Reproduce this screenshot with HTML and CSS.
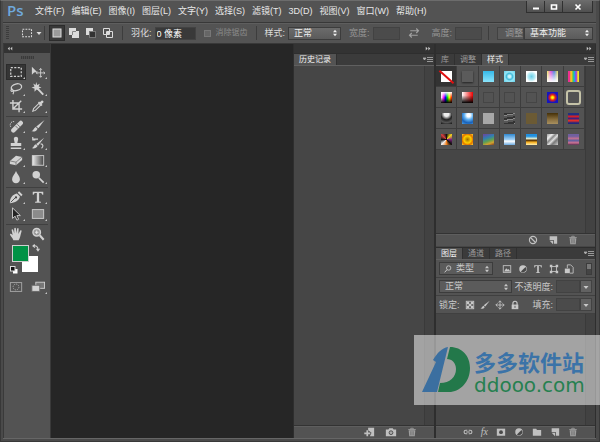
FILE: index.html
```html
<!DOCTYPE html>
<html lang="zh-CN">
<head>
    <meta charset="UTF-8">
    <meta name="viewport" content="width=device-width, initial-scale=1.0">
    <title>Ps</title>
    <link rel="stylesheet" href="styles.css">
</head>
<body>

    <!-- Icon sprite -->
    <svg class="sprite" aria-hidden="true">
        <symbol id="i-marquee" viewBox="0 0 16 16"><rect x="2" y="3" width="12" height="10" fill="none" stroke="currentColor" stroke-width="1.4" stroke-dasharray="2.4 1.6"/></symbol>
        <symbol id="i-move" viewBox="0 0 16 16"><path d="M1 2v9l2.500-2.300L7 8z" fill="currentColor"/><path d="M11 4v10M6 9h10M9.500 5.500L11 4l1.500 1.500M9.500 12.500L11 14l1.500-1.500M7.500 7.500L6 9l1.500 1.500M14.500 7.500L16 9l-1.500 1.500" fill="none" stroke="currentColor"/></symbol>
        <symbol id="i-lasso" viewBox="0 0 16 16"><ellipse cx="8.500" cy="6" rx="6" ry="3.800" transform="rotate(-14 8.500 6)" fill="none" stroke="currentColor" stroke-width="1.500"/><path d="M4 8c-3 1-2 3.500 0 2.500S6 10 4.500 14" fill="none" stroke="currentColor" stroke-width="1.200"/></symbol>
        <symbol id="i-wand" viewBox="0 0 16 16"><path d="M7 7l7 7.500" stroke="currentColor" stroke-width="2.200"/><path d="M6 0l1 3.500L10 2 8.800 5 12 6.200 8.800 7.300 9.500 10 6.500 8.700 4 11V7.500L.5 6.500 4 5 2.500 1.800 5.200 3.300z" fill="currentColor"/></symbol>
        <symbol id="i-crop" viewBox="0 0 16 16"><path d="M4.500 1v10.500H15M1 4.500h10.500V15M4.500 11.500L14 2" fill="none" stroke="currentColor" stroke-width="1.600"/></symbol>
        <symbol id="i-dropper" viewBox="0 0 16 16"><path d="M2 14l1-3 6-6 2 2-6 6z" fill="none" stroke="currentColor" stroke-width="1.200"/><path d="M8 4l1.200-1.200 1 1L12 2c1-1.200 3.200.8 2 2l-1.800 1.800 1 1L12 8z" fill="currentColor"/></symbol>
        <symbol id="i-heal" viewBox="0 0 16 16"><path d="M5 13L13.500 4.500" stroke="currentColor" stroke-width="5" stroke-linecap="round"/><path d="M7.500 8l3 3M9.500 6l3 3" stroke="#666"/><path d="M2 9C0 6 3 2 6 3" fill="none" stroke="currentColor" stroke-dasharray="1.500 1"/></symbol>
        <symbol id="i-brush" viewBox="0 0 16 16"><path d="M15.500 1L8.500 10.500 6 8.500z" fill="currentColor"/><path d="M5.500 9l2 2c-1 3-4 3.500-7 3C3 13 3 10 5.500 9z" fill="currentColor"/></symbol>
        <symbol id="i-stamp" viewBox="0 0 16 16"><path d="M5.500 3.500C5.500 0 10.500 0 10.500 3.500L9.500 8H14v3.500H2V8h4.500zM2 13h12v1.800H2z" fill="currentColor"/></symbol>
        <symbol id="i-history" viewBox="0 0 16 16"><path d="M15 2L8 11 6 9zM5.500 9.500l2 2c-1 2.500-4 3-6.500 2.500 2.500-1 2-3.500 4.500-4.500z" fill="currentColor"/><path d="M2 3.500h6M2 1v3.500h3M11 9c3 0 3.500 3 1 5" fill="none" stroke="currentColor" stroke-width="1.300"/></symbol>
        <symbol id="i-eraser" viewBox="0 0 16 16"><path d="M1 9l7-6 7 1.500v3.500l-7 6-7-1.500z" fill="currentColor"/><path d="M1 9l7 1.500 7-6M8 10.500V14" fill="none" stroke="#777"/></symbol>
        <symbol id="i-gradient" viewBox="0 0 16 16"><linearGradient id="grad"><stop stop-color="#eee"/><stop offset="1" stop-color="#444"/></linearGradient><rect x="1.500" y="3" width="13" height="11" fill="url(#grad)" stroke="currentColor"/></symbol>
        <symbol id="i-drop" viewBox="0 0 16 16"><path d="M8 1c1 3 4.500 6 4.500 9.500 0 6-9 6-9 0C3.500 7 7 4 8 1z" fill="currentColor"/></symbol>
        <symbol id="i-dodge" viewBox="0 0 16 16"><circle cx="6" cy="5.500" r="4.300" fill="currentColor"/><path d="M9 9l5.500 5.500" stroke="currentColor" stroke-width="2"/></symbol>
        <symbol id="i-pen" viewBox="0 0 16 16"><path d="M1 15C1 9 4 5 9 4l3.500 3.500C11.500 12 7 15 1 15zM10 3l1.500-1.500 4 4L14 7z" fill="currentColor"/><path d="M2 14l5.500-5.500" stroke="#444"/><circle cx="8" cy="8.500" r="1.300" fill="#444"/></symbol>
        <symbol id="i-type" viewBox="0 0 16 16"><path d="M2 2h12v3.500h-1C12.500 3.500 12 3.300 9.300 3.300V13l2 .5v1H4.700v-1l2-.5V3.300C4 3.300 3.500 3.500 3 5.500H2z" fill="currentColor"/></symbol>
        <symbol id="i-arrow" viewBox="0 0 16 16"><path d="M4 1v12l3-2.500 2 4.500 2-1-2-4.200h4z" fill="#222" stroke="currentColor"/></symbol>
        <symbol id="i-rect" viewBox="0 0 16 16"><rect x="1.500" y="3" width="13" height="10" fill="#8b8b8b" stroke="currentColor"/></symbol>
        <symbol id="i-hand" viewBox="0 0 16 16"><path d="M5 15C4 12 1 10 1 8c1-1 2.500.3 3.200 1.500L3 3.500c0-1.200 1.500-1.200 1.800 0L6 7.500 6 1.800c.2-1.200 1.700-1.200 1.900 0L8.300 7l1-5c.4-1.200 1.800-.9 1.700.3L10.700 8l2-3.800c.8-1 2-.3 1.600.8C13 9 13 12 11 15z" fill="currentColor"/></symbol>
        <symbol id="i-zoom" viewBox="0 0 16 16"><circle cx="6.500" cy="6" r="4.300" fill="#999" stroke="currentColor" stroke-width="1.600"/><path d="M10 9.500l4.500 5" stroke="currentColor" stroke-width="2.400"/><path d="M4.500 6h4M6.500 4v4" stroke="#eee"/></symbol>
        <symbol id="i-mask" viewBox="0 0 16 16"><rect x="1.500" y="3" width="13" height="10" fill="none" stroke="currentColor"/><circle cx="8" cy="8" r="3.300" fill="none" stroke="currentColor" stroke-dasharray="1.500 1"/></symbol>
        <symbol id="i-screen" viewBox="0 0 16 16"><rect x="5.500" y="2.500" width="10" height="7" fill="#777" stroke="currentColor"/><rect x="1" y="6" width="9" height="7" fill="currentColor" stroke="#666"/></symbol>
        <symbol id="i-swap" viewBox="0 0 16 16"><path d="M3 4c5-2 9 2 9 7M5.500 1L2 4l4 3M9 9.500l3 4 3-4" fill="none" stroke="currentColor" stroke-width="2.200"/></symbol>
        <symbol id="i-default" viewBox="0 0 16 16"><rect x="6" y="6" width="9" height="9" fill="#fff"/><rect x="1" y="1" width="9" height="9" fill="#111" stroke="#ddd" stroke-width="2"/></symbol>
        <symbol id="i-sel-new" viewBox="0 0 12 12"><rect x="2" y="2" width="8" height="8" fill="#999" stroke="currentColor"/></symbol>
        <symbol id="i-sel-add" viewBox="0 0 12 12"><path d="M1 1h7v3h3v7H4V8H1z" fill="currentColor"/><path d="M4.500 8V4.500H8" fill="none" stroke="#888"/></symbol>
        <symbol id="i-sel-sub" viewBox="0 0 12 12"><path d="M1 1h7v3H4v4H1z" fill="currentColor"/><rect x="4.500" y="4.500" width="6" height="6" fill="#333" stroke="#777"/></symbol>
        <symbol id="i-sel-int" viewBox="0 0 12 12"><path d="M1.500 1.500h6v6h-6zM4.500 4.500h6v6h-6z" fill="none" stroke="currentColor"/><path d="M5 5h2v2H5z" fill="currentColor"/></symbol>
        <symbol id="i-exchange" viewBox="0 0 16 16"><path d="M3 5h11M11 2l3 3-3 3M13 11H2M5 8l-3 3 3 3" fill="none" stroke="currentColor" stroke-width="1.500"/></symbol>
        <symbol id="i-updown" viewBox="0 0 8 10"><path d="M1.500 4L4 1l2.500 3zM1.500 6L4 9l2.500-3z" fill="currentColor"/></symbol>
        <symbol id="i-down" viewBox="0 0 8 8"><path d="M1.500 3h5L4 6z" fill="currentColor"/></symbol>
        <symbol id="i-menu" viewBox="0 0 10 6"><path d="M0 1h3L1.500 3zM4 .5h6M4 2.500h6M4 4.500h6" fill="currentColor" stroke="currentColor" stroke-width=".8"/></symbol>
        <symbol id="i-collapse" viewBox="0 0 8 6"><path d="M3.500 .5L1 3l2.500 2.500zM7 .5L4.500 3 7 5.500z" fill="currentColor"/></symbol>
        <symbol id="i-expand" viewBox="0 0 8 6"><path d="M1 .5L3.500 3 1 5.500zM4.500 .5L7 3 4.500 5.500z" fill="currentColor"/></symbol>
        <symbol id="i-trash" viewBox="0 0 12 12"><path d="M1.500 3h9M4.500 3V1.500h3V3" fill="none" stroke="currentColor"/><path d="M2 4h8l-.7 7H2.700z" fill="currentColor"/><path d="M4.700 5v5M7.300 5v5" stroke="#555" stroke-width=".8"/></symbol>
        <symbol id="i-new" viewBox="0 0 12 12"><path d="M2 1.500h9v9H7V6H2z" fill="currentColor"/><path d="M2 7h4v4z" fill="currentColor"/></symbol>
        <symbol id="i-none" viewBox="0 0 12 12"><circle cx="6" cy="6" r="4.300" fill="none" stroke="currentColor" stroke-width="1.400"/><path d="M3 3l6 6" stroke="currentColor" stroke-width="1.400"/></symbol>
        <symbol id="i-camera" viewBox="0 0 14 12"><path d="M1 3h3l1-1.500h4L10 3h3v8H1z" fill="currentColor"/><circle cx="7" cy="6.800" r="2.200" fill="#aaa" stroke="#444"/></symbol>
        <symbol id="i-newdoc" viewBox="0 0 14 12"><path d="M6 1h7v10H8l2-4-4-3z" fill="currentColor"/><path d="M5 4v7M1.500 7.500h7" stroke="currentColor" stroke-width="2"/></symbol>
        <symbol id="i-link" viewBox="0 0 14 12"><path d="M6 3.500H4a2.500 2.500 0 000 5h2M8 3.500h2a2.500 2.500 0 010 5H8M4.500 6h5" fill="none" stroke="currentColor" stroke-width="1.500"/></symbol>
        <symbol id="i-maskbtn" viewBox="0 0 12 12"><path d="M1 2h10v8.500H1z" fill="currentColor"/><circle cx="6" cy="6.200" r="2.300" fill="#484848"/></symbol>
        <symbol id="i-adjust" viewBox="0 0 12 12"><circle cx="6" cy="6" r="4.500" fill="currentColor"/><path d="M9 3.500A3.900 3.900 0 013.500 9z" fill="#484848"/></symbol>
        <symbol id="i-folder" viewBox="0 0 12 12"><path d="M1 2h4l1 1.500h5v7H1z" fill="currentColor"/></symbol>
        <symbol id="i-search" viewBox="0 0 12 12"><circle cx="7" cy="4.500" r="3.300" fill="none" stroke="currentColor" stroke-width="1.300"/><path d="M4.500 7L1 11" stroke="currentColor" stroke-width="1.500"/></symbol>
        <symbol id="i-image" viewBox="0 0 12 12"><rect x="1.500" y="2" width="9" height="8" fill="none" stroke="currentColor"/><path d="M2.500 9l2.500-4 2 2 1-1 2 3z" fill="currentColor"/></symbol>
        <symbol id="i-shape" viewBox="0 0 12 12"><rect x="3" y="3" width="6" height="6" fill="none" stroke="currentColor"/><path d="M1 1h3v3H1zM8 1h3v3H8zM1 8h3v3H1zM8 8h3v3H8z" fill="currentColor"/></symbol>
        <symbol id="i-smart" viewBox="0 0 12 12"><path d="M4 5V1h4l3 3v7H7" fill="none" stroke="currentColor"/><path d="M1 5.500h6V11H1z" fill="currentColor"/></symbol>
        <symbol id="i-checker" viewBox="0 0 12 12"><rect x="1.500" y="1.500" width="9" height="9" fill="none" stroke="currentColor"/><path d="M2 2h3v3H2zM7 2h3v3H7zM4.500 4.500h3v3h-3zM2 7h3v3H2zM7 7h3v3H7z" fill="currentColor"/></symbol>
        <symbol id="i-cross" viewBox="0 0 12 12"><path d="M6 1v10M1 6h10M4 3l2-2 2 2M4 9l2 2 2-2M3 4L1 6l2 2M9 4l2 2-2 2" fill="none" stroke="currentColor"/></symbol>
        <symbol id="i-lock" viewBox="0 0 12 12"><path d="M3.500 6V4a2.500 2.500 0 015 0v2" fill="none" stroke="currentColor" stroke-width="1.400"/><path d="M2 5.500h8V11H2z" fill="currentColor"/><path d="M6 7v2.500" stroke="#444"/></symbol>
    </svg>

    <div class="window">

        <header class="menubar">
            <span class="logo">Ps</span>
            <nav class="menus">
                <button>文件(F)</button>
                <button>编辑(E)</button>
                <button>图像(I)</button>
                <button>图层(L)</button>
                <button>文字(Y)</button>
                <button>选择(S)</button>
                <button>滤镜(T)</button>
                <button>3D(D)</button>
                <button>视图(V)</button>
                <button>窗口(W)</button>
                <button>帮助(H)</button>
            </nav>
            <div class="window-buttons">
                <button aria-label="最小化"><svg viewBox="0 0 10 8"><path d="M2 5.500h6" stroke="#fff" stroke-width="2"/></svg></button>
                <button aria-label="最大化"><svg viewBox="0 0 10 8"><path d="M2.500 2h5v4h-5z" fill="none" stroke="#fff" stroke-width="1.600"/></svg></button>
                <button class="close" aria-label="关闭"><svg viewBox="0 0 10 8"><path d="M2.500 1.500l5 5M7.500 1.500l-5 5" stroke="#fff" stroke-width="1.600"/></svg></button>
            </div>
        </header>

        <div class="options">
            <span class="grip"></span>
            <button class="current-tool" aria-label="矩形选框"><svg class="icon-12"><use href="#i-marquee"/></svg><svg class="icon-8"><use href="#i-down"/></svg></button>
            <span class="separator"></span>
            <div class="modes">
                <button class="active" aria-label="新选区"><svg class="icon-12"><use href="#i-sel-new"/></svg></button>
                <button aria-label="添加到选区"><svg class="icon-12"><use href="#i-sel-add"/></svg></button>
                <button aria-label="从选区减去"><svg class="icon-12"><use href="#i-sel-sub"/></svg></button>
                <button aria-label="与选区交叉"><svg class="icon-12"><use href="#i-sel-int"/></svg></button>
            </div>
            <span class="separator"></span>
            <label class="field">羽化: <input class="feather" type="text" value="0 像素"></label>
            <label class="field check"><input type="checkbox" disabled> 消除锯齿</label>
            <span class="separator"></span>
            <label class="field">样式:
                <span class="select style-select"><select><option>正常</option></select><svg><use href="#i-updown"/></svg></span>
            </label>
            <label class="field off">宽度: <input type="text" disabled></label>
            <button class="exchange" aria-label="交换宽度和高度" disabled><svg class="icon-12"><use href="#i-exchange"/></svg></button>
            <label class="field off">高度: <input type="text" disabled></label>
            <span class="separator"></span>
            <div class="workspace">
                <button class="refine" disabled>调整</button>
                <span class="select"><select aria-label="工作区"><option>基本功能</option></select><svg><use href="#i-updown"/></svg></span>
            </div>
        </div>

        <main class="main">

            <aside class="toolbox">
                <div class="dock-header"><svg><use href="#i-collapse"/></svg></div>
                <div class="toolbox-grip"></div>
                <div class="tools">
                    <button class="active" aria-label="矩形选框工具"><svg><use href="#i-marquee"/></svg></button>
                    <button aria-label="移动工具"><svg><use href="#i-move"/></svg></button>
                    <button aria-label="套索工具"><svg><use href="#i-lasso"/></svg></button>
                    <button aria-label="魔棒工具"><svg><use href="#i-wand"/></svg></button>
                    <button aria-label="裁剪工具"><svg><use href="#i-crop"/></svg></button>
                    <button aria-label="吸管工具"><svg><use href="#i-dropper"/></svg></button>
                </div>
                <div class="tools">
                    <button aria-label="修复画笔工具"><svg><use href="#i-heal"/></svg></button>
                    <button aria-label="画笔工具"><svg><use href="#i-brush"/></svg></button>
                    <button aria-label="仿制图章工具"><svg><use href="#i-stamp"/></svg></button>
                    <button aria-label="历史记录画笔工具"><svg><use href="#i-history"/></svg></button>
                    <button aria-label="橡皮擦工具"><svg><use href="#i-eraser"/></svg></button>
                    <button aria-label="渐变工具"><svg><use href="#i-gradient"/></svg></button>
                    <button aria-label="模糊工具"><svg><use href="#i-drop"/></svg></button>
                    <button aria-label="减淡工具"><svg><use href="#i-dodge"/></svg></button>
                </div>
                <div class="tools">
                    <button aria-label="钢笔工具"><svg><use href="#i-pen"/></svg></button>
                    <button aria-label="文字工具"><svg><use href="#i-type"/></svg></button>
                    <button aria-label="路径选择工具"><svg><use href="#i-arrow"/></svg></button>
                    <button aria-label="矩形工具"><svg><use href="#i-rect"/></svg></button>
                </div>
                <div class="tools last">
                    <button class="single" aria-label="抓手工具"><svg><use href="#i-hand"/></svg></button>
                    <button class="single" aria-label="缩放工具"><svg><use href="#i-zoom"/></svg></button>
                </div>
                <div class="colors">
                    <button class="background" aria-label="背景色"></button>
                    <button class="foreground" aria-label="前景色"></button>
                    <button class="swap" aria-label="切换颜色"><svg><use href="#i-swap"/></svg></button>
                    <button class="default" aria-label="默认颜色"><svg><use href="#i-default"/></svg></button>
                </div>
                <div class="tools last">
                    <button class="single dim" aria-label="快速蒙版"><svg><use href="#i-mask"/></svg></button>
                    <button aria-label="屏幕模式"><svg><use href="#i-screen"/></svg></button>
                </div>
            </aside>

            <section class="canvas"></section>

            <section class="dock history">
                <div class="dock-header right"><svg><use href="#i-expand"/></svg></div>
                <div class="tabs">
                    <button class="active">历史记录</button>
                    <svg class="panel-menu"><use href="#i-menu"/></svg>
                </div>
                <div class="panel-body"><div class="scrollbar"></div></div>
                <footer class="panel-footer">
                    <button aria-label="从当前状态创建新文档"><svg class="icon-12"><use href="#i-newdoc"/></svg></button>
                    <button aria-label="创建新快照"><svg class="icon-12"><use href="#i-camera"/></svg></button>
                    <button class="dim" aria-label="删除"><svg class="icon-10"><use href="#i-trash"/></svg></button>
                </footer>
            </section>

            <section class="dock side">
                <div class="dock-header right"><svg><use href="#i-expand"/></svg></div>

                <div class="tabs">
                    <button>库</button>
                    <button>调整</button>
                    <button class="active">样式</button>
                    <svg class="panel-menu"><use href="#i-menu"/></svg>
                </div>
                <div class="panel-body styles-panel">
                    <div class="styles">
                        <div class="cell active"><i class="s-none"></i></div>
                        <div class="cell"><i class="s-gray"></i></div>
                        <div class="cell"><i class="s-sky"></i></div>
                        <div class="cell"><i class="s-glow"></i></div>
                        <div class="cell"><i class="s-glow-white"></i></div>
                        <div class="cell"><i class="s-pastel"></i></div>
                        <div class="cell"><i class="s-bars"></i></div>

                        <div class="cell"><i class="s-spectrum"></i></div>
                        <div class="cell"><i class="s-red"></i></div>
                        <div class="cell"><i class="s-empty"></i></div>
                        <div class="cell"><i class="s-empty"></i></div>
                        <div class="cell"><i class="s-empty"></i></div>
                        <div class="cell"><i class="s-target"></i></div>
                        <div class="cell"><i class="s-frame"></i></div>

                        <div class="cell"><i class="s-chrome"></i></div>
                        <div class="cell"><i class="s-gel"></i></div>
                        <div class="cell"><i class="s-silver"></i></div>
                        <div class="cell"><i class="s-noise"></i></div>
                        <div class="cell"><i class="s-brown"></i></div>
                        <div class="cell"><i class="s-bronze"></i></div>
                        <div class="cell"><i class="s-stripes"></i></div>

                        <div class="cell"><i class="s-camo"></i></div>
                        <div class="cell"><i class="s-gold"></i></div>
                        <div class="cell"><i class="s-rainbow"></i></div>
                        <div class="cell"><i class="s-cloud"></i></div>
                        <div class="cell"><i class="s-sunset"></i></div>
                        <div class="cell"><i class="s-marble"></i></div>
                        <div class="cell"><i class="s-plum"></i></div>
                    </div>
                    <div class="scrollbar"></div>
                </div>
                <footer class="panel-footer">
                    <button aria-label="清除样式"><svg class="icon-10"><use href="#i-none"/></svg></button>
                    <button aria-label="创建新样式"><svg class="icon-10"><use href="#i-new"/></svg></button>
                    <button class="dim" aria-label="删除样式"><svg class="icon-10"><use href="#i-trash"/></svg></button>
                </footer>

                <div class="tabs layer-tabs">
                    <button class="active">图层</button>
                    <button>通道</button>
                    <button>路径</button>
                    <svg class="panel-menu"><use href="#i-menu"/></svg>
                </div>
                <div class="layer-row">
                    <span class="select kind"><svg class="search"><use href="#i-search"/></svg><select aria-label="滤镜类型"><option>类型</option></select><svg><use href="#i-updown"/></svg></span>
                    <div class="filters">
                        <button aria-label="像素图层"><svg class="icon-10"><use href="#i-image"/></svg></button>
                        <button aria-label="调整图层"><svg class="icon-10"><use href="#i-adjust"/></svg></button>
                        <button aria-label="文字图层"><svg class="icon-10"><use href="#i-type"/></svg></button>
                        <button aria-label="形状图层"><svg class="icon-10"><use href="#i-shape"/></svg></button>
                        <button aria-label="智能对象"><svg class="icon-10"><use href="#i-smart"/></svg></button>
                    </div>
                    <span class="toggle"></span>
                </div>
                <div class="layer-row">
                    <span class="select blend"><select aria-label="混合模式"><option>正常</option></select><svg><use href="#i-updown"/></svg></span>
                    <label class="amount">不透明度: <input type="text"></label>
                    <button class="drop" aria-label="不透明度选项"><svg class="icon-8"><use href="#i-down"/></svg></button>
                </div>
                <div class="layer-row">
                    <span class="lock-label">锁定:</span>
                    <div class="locks">
                        <button aria-label="锁定透明像素"><svg class="icon-10"><use href="#i-checker"/></svg></button>
                        <button aria-label="锁定图像像素"><svg class="icon-10"><use href="#i-brush"/></svg></button>
                        <button aria-label="锁定位置"><svg class="icon-10"><use href="#i-cross"/></svg></button>
                        <button aria-label="锁定全部"><svg class="icon-10"><use href="#i-lock"/></svg></button>
                    </div>
                    <label class="amount">填充: <input type="text"></label>
                    <button class="drop" aria-label="填充选项"><svg class="icon-8"><use href="#i-down"/></svg></button>
                </div>
                <div class="panel-body"><div class="scrollbar"></div></div>
                <footer class="panel-footer layer-footer">
                    <button aria-label="链接图层"><svg class="icon-10"><use href="#i-link"/></svg></button>
                    <button class="fx">fx</button>
                    <button aria-label="添加蒙版"><svg class="icon-10"><use href="#i-maskbtn"/></svg></button>
                    <button aria-label="调整图层"><svg class="icon-10"><use href="#i-adjust"/></svg></button>
                    <button aria-label="新建组"><svg class="icon-10"><use href="#i-folder"/></svg></button>
                    <button aria-label="新建图层"><svg class="icon-10"><use href="#i-new"/></svg></button>
                    <button class="dim" aria-label="删除图层"><svg class="icon-10"><use href="#i-trash"/></svg></button>
                </footer>
            </section>

        </main>

        <div class="watermark">
            <svg viewBox="0 0 48 46" aria-hidden="true">
                <path d="M0 45L14 15l-3-2C15 6 20 1 26 0L15 45z" fill="#3b6fa0"/>
                <path d="M28 0C40 0 48 9 48 21 48 35 38 45 27 45H16l2-9c10 0 16-6 16-14 0-6-4-10-9-10z" fill="#23784a"/>
            </svg>
            <div class="watermark-text">
                <strong>多多软件站</strong>
                <span>ddooo.com</span>
            </div>
        </div>

    </div>

</body>
</html>
```

FILE: styles.css
```css
* {
    box-sizing: border-box;
}
body {
    margin: 0;
    background-color: #464646;
    color: #dcdcdc;
    font-family: "Liberation Sans", "Noto Sans CJK SC", sans-serif;
    font-size: 9px;
    line-height: 12px;
}
button,
input,
select {
    margin: 0;
    padding: 0;
    border: 0;
    border-radius: 0;
    background: none;
    color: inherit;
    font: inherit;
}
button {
    display: flex;
    align-items: center;
    justify-content: center;
}
svg {
    display: block;
    flex: none;
}
.sprite {
    position: absolute;
    width: 0;
    height: 0;
}
.icon-8 {
    width: 8px;
    height: 8px;
}
.icon-10 {
    width: 10px;
    height: 10px;
}
.icon-12 {
    width: 12px;
    height: 12px;
}
.dim {
    opacity: 0.7;
}

/* Window frame */
.window {
    position: relative;
    display: flex;
    flex-direction: column;
    height: 100vh;
    padding: 0 3px 2px 2px;
    border: 1px solid #383838;
    border-top-color: #6c6c6c;
    background-color: #4a4a4a;
}
.menubar {
    display: flex;
    align-items: flex-start;
    height: 21px;
    background-color: #535353;
}
.logo {
    width: 27px;
    padding-left: 4px;
    color: #6fa8dc;
    font-family: "Open Sans", sans-serif;
    font-size: 15px;
    font-weight: 600;
    line-height: 18px;
}
.menus {
    display: flex;
    flex: 1;
    gap: 7px;
    padding: 4px 0 0 5px;
}
.menus button {
    white-space: nowrap;
    color: #e8e8e8;
}
.window-buttons {
    display: flex;
    height: 12px;
    margin-right: 3px;
    border: 1px solid #303030;
    border-top: 0;
}
.window-buttons button {
    width: 18px;
    background: linear-gradient(#6a6a6a, #505050);
    border-right: 1px solid #303030;
}
.window-buttons .close {
    width: 29px;
    border-right: 0;
}
.window-buttons svg {
    width: 10px;
    height: 8px;
}

/* Options bar */
.options {
    display: flex;
    align-items: center;
    height: 22px;
    border-top: 1px solid #383838;
    border-bottom: 1px solid #383838;
    background-color: #535353;
    box-shadow: inset 0 1px #5e5e5e;
}
.grip {
    width: 3px;
    height: 14px;
    margin: 0 12px 0 3px;
    background: repeating-linear-gradient(#3c3c3c 0 1px, #535353 1px 2px);
}
.current-tool {
    gap: 2px;
}
.separator {
    width: 1px;
    height: 14px;
    margin: 0 4px 0 1px;
    background-color: #3d3d3d;
}
.modes {
    display: flex;
    gap: 1px;
}
.modes button {
    width: 16px;
    height: 16px;
}
.modes .active {
    background-color: #383838;
    border: 1px solid #2c2c2c;
}
.modes + .separator {
    margin: 0 8px 0 6px;
}
.field {
    display: flex;
    align-items: center;
    gap: 3px;
    white-space: nowrap;
}
.field input[type="text"] {
    width: 27px;
    height: 13px;
    border: 1px solid #424242;
    background-color: #4b4b4b;
}
.field .feather[type="text"] {
    width: 41px;
    padding-left: 1px;
    background-color: #393939;
    color: #fff;
}
.check {
    margin: 0 4px 0 8px;
    font-size: 8px;
    color: #8a8a8a;
    gap: 5px;
}
.check input {
    appearance: none;
    width: 7px;
    height: 7px;
    border: 1px solid #777;
    background-color: #666;
}
.check + .separator {
    margin: 0 8px 0 4px;
}
.off {
    margin-left: 8px;
    color: #959595;
}
.exchange {
    margin: 0 4px 0 8px;
    color: #a0a0a0;
}
.off + .separator {
    margin: 0 8px 0 6px;
}
.select {
    position: relative;
    display: flex;
    align-items: center;
    height: 13px;
    border: 1px solid #3c3c3c;
    background: linear-gradient(#6b6b6b, #5b5b5b);
    color: #eee;
}
.select select {
    appearance: none;
    flex: 1;
    min-width: 0;
    height: 11px;
    padding-left: 5px;
    line-height: 11px;
    outline: 0;
}
.select svg {
    width: 8px;
    height: 8px;
    margin-right: 1px;
    pointer-events: none;
}
.style-select {
    width: 53px;
}
.workspace {
    display: flex;
    flex: 1;
    margin-right: 3px;
}
.workspace .select {
    flex: 1;
}
.refine {
    width: 27px;
    height: 13px;
    border: 1px solid #424242;
    background-color: #595959;
    color: #999;
    justify-content: flex-end;
}

/* Main area */
.main {
    display: flex;
    flex: 1;
    min-height: 0;
    border-bottom: 1px solid #666;
    background-color: #262626;
}
.dock-header {
    display: flex;
    align-items: center;
    height: 9px;
    padding: 0 3px;
    background-color: #333;
    color: #ccc;
}
.dock-header.right {
    justify-content: flex-end;
}
.dock-header svg {
    width: 6px;
    height: 5px;
}
.toolbox {
    width: 48px;
    border-left: 1px solid #3a3a3a;
    border-right: 1px solid #3a3a3a;
    background-color: #535353;
    color: #d2d2d2;
}
.toolbox-grip {
    width: 13px;
    height: 3px;
    margin: 3px auto 4px;
    background: repeating-linear-gradient(90deg, #3a3a3a 0 1px, #4b4b4b 1px 2px);
}
.tools {
    display: grid;
    grid-template-columns: 20px 20px;
    grid-auto-rows: 16px;
    gap: 1px 2px;
    margin: 0 2px;
    padding: 1px 0 2px;
    border-bottom: 1px solid #404040;
}
.tools.last {
    border-bottom: 0;
}
.tools button {
    position: relative;
}
.tools .active {
    background-color: #353535;
    box-shadow: 0 0 0 1px #2c2c2c inset;
}
.tools button::after {
    content: "";
    position: absolute;
    right: 1px;
    bottom: 1px;
    border: 1px solid #c5c5c5;
    border-top-color: transparent;
    border-left-color: transparent;
}
.tools .single::after {
    display: none;
}
.tools svg {
    width: 14px;
    height: 14px;
}
.colors {
    position: relative;
    height: 34px;
}
.colors button {
    position: absolute;
}
.colors .foreground {
    top: 1px;
    left: 8px;
    width: 17px;
    height: 17px;
    border: 1px solid #cfcfcf;
    background-color: #009245;
}
.colors .background {
    top: 12px;
    left: 18px;
    width: 16px;
    height: 16px;
    background-color: #fff;
}
.colors .swap {
    top: 0;
    left: 28px;
}
.colors .default {
    top: 22px;
    left: 6px;
}
.colors svg {
    width: 8px;
    height: 8px;
}
.canvas {
    flex: 1;
}

/* Docks and panels */
.dock {
    display: flex;
    flex-direction: column;
    border-left: 1px solid #2e2e2e;
    border-right: 1px solid #2e2e2e;
    background-color: #464646;
}
.history {
    width: 142px;
}
.side {
    width: 161px;
}
.tabs {
    display: flex;
    height: 13px;
    flex: none;
    border-top: 1px solid #2e2e2e;
    border-bottom: 1px solid #606060;
    background-color: #3b3b3b;
    color: #9a9a9a;
    font-size: 8px;
}
.tabs button {
    padding: 0 5px;
    border-right: 1px solid #303030;
    line-height: 11px;
}
.tabs .active {
    background-color: #535353;
    color: #f0f0f0;
}
.panel-menu {
    width: 10px;
    height: 6px;
    margin: 3px 1px 0 auto;
    color: #b0b0b0;
}
.panel-body {
    display: flex;
    flex: 1;
    justify-content: flex-end;
    min-height: 0;
}
.scrollbar {
    width: 10px;
    border-left: 1px solid #3a3a3a;
    background-color: #424242;
}
.panel-footer {
    display: flex;
    align-items: center;
    justify-content: flex-end;
    gap: 10px;
    height: 13px;
    padding-right: 17px;
    border-top: 1px solid #333;
    background-color: #535353;
    box-shadow: inset 0 1px #5e5e5e;
    color: #c0c0c0;
}

/* Styles panel */
.styles-panel {
    flex: none;
    height: 167px;
}
.styles {
    display: grid;
    flex: 1;
    grid-template-columns: repeat(7, 1fr);
    grid-auto-rows: 21px;
    align-content: start;
}
.cell {
    display: flex;
    align-items: center;
    justify-content: center;
    border-right: 1px solid #3d3d3d;
    border-bottom: 1px solid #3d3d3d;
    background-color: #535353;
}
.cell.active {
    background-color: #333;
}
.cell i {
    width: 11px;
    height: 11px;
}
.s-none {
    position: relative;
    background-color: #fff;
}
.s-none::after {
    content: "";
    position: absolute;
    top: 5px;
    left: -4px;
    width: 19px;
    height: 2px;
    background-color: #e01010;
    transform: rotate(42deg);
}
.s-gray {
    background-color: #5b5b5b;
    box-shadow: 0 1px 2px #222;
}
.s-sky {
    background: linear-gradient(#35b8e8, #8be4fb);
}
.s-glow {
    background: radial-gradient(#c8f4fc 15%, #40bcdc 40%, #9ae6f6 60%, #5fcfea);
}
.s-glow-white {
    background: radial-gradient(#6ad0e8, #b8ecf6 45%, #fff 70%);
}
.s-pastel {
    background: linear-gradient(transparent, #fff), linear-gradient(90deg, #f0f060, #e055e0 35%, #5080e0 65%, #f0e060);
}
.s-bars {
    background: linear-gradient(90deg, #f03090 0 15%, #f5c020 25% 35%, #40d050 45%, #20a0f0 60%, #b030e0 75%, #f0e020 90%);
}
.s-spectrum {
    background: linear-gradient(#fff, transparent 50%, #000), linear-gradient(90deg, #fff, #f0f 25%, #00f 40%, #0e0 60%, #ff0 75%, #f00);
}
.s-red {
    background: linear-gradient(transparent 30%, #000), linear-gradient(90deg, #fff, #e00);
}
.s-empty {
    border: 1px solid #454545;
}
.s-target {
    background: radial-gradient(#ff0 10%, #f02010 35%, #1515c0 65%);
}
.cell .s-frame {
    width: 15px;
    height: 15px;
    border: 2px solid #c5c3a8;
    border-radius: 3px;
}
.s-chrome {
    background: radial-gradient(circle at 50% 10%, #eee 20%, #222 50%, #555 75%, #111);
}
.s-gel {
    background: radial-gradient(circle at 60% 20%, #fff 15%, #60b0f0 40%, #1860b8 70%, #49a0e8);
}
.s-silver {
    background-color: #a8a8a8;
}
.s-noise {
    background: repeating-linear-gradient(170deg, #333 0 2px, #888 2px 3px, #555 3px 5px);
}
.s-brown {
    background-color: #6b5a34;
}
.s-bronze {
    background: linear-gradient(#453008, #8a7040 60%, #a89060);
}
.s-stripes {
    background: linear-gradient(#223080 0 15%, #e02020 30%, #402080 50%, #f03020 70%, #202880 90%);
}
.s-camo {
    background: conic-gradient(#111, #f0d020, #802080, #111, #f08020, #eee, #111, #d04040, #111);
}
.s-gold {
    background: radial-gradient(#a07000, #ffd000 45%, #e07000 70%, #ffe030);
}
.s-rainbow {
    background: linear-gradient(160deg, #7040a0, #3080b0 35%, #60a050 60%, #d0a030 80%, #804020);
}
.s-cloud {
    background: linear-gradient(#3088d0, #a0d0f5 50%, #fff 65%, #68a8e0);
}
.s-sunset {
    background: linear-gradient(#2090e0 20%, #f8f8d0 45%, #402000 55%, #f8b020 75%, #fff0b0);
}
.s-marble {
    background: linear-gradient(135deg, #999, #eee 25%, #888 40%, #ddd 55%, #777 70%, #ccc);
}
.s-plum {
    background: linear-gradient(#7060a0 20%, #c07090 40%, #6060a0 60%, #d07090 80%, #503050);
}

/* Layers panel */
.layer-tabs {
    margin-top: 1px;
}
.layer-row {
    display: flex;
    align-items: center;
    height: 18px;
    flex: none;
    padding: 0 3px;
    border-bottom: 1px solid #404040;
    background-color: #535353;
    color: #c8c8c8;
}
.layer-row .select {
    background: #5b5b5b;
    color: #c8c8c8;
}
.kind {
    width: 54px;
}
.kind .search {
    margin-left: 4px;
}
.kind select {
    padding-left: 3px;
}
.filters {
    display: flex;
    flex: 1;
    justify-content: space-between;
    padding: 0 12px 0 9px;
}
.toggle {
    width: 6px;
    height: 12px;
    border: 1px solid #3c3c3c;
    background: linear-gradient(#777 50%, #444 50%);
}
.blend {
    width: 73px;
}
.amount {
    display: flex;
    flex: 1;
    align-items: center;
    justify-content: flex-end;
    gap: 3px;
    white-space: nowrap;
}
.amount input {
    width: 24px;
    height: 13px;
    border: 1px solid #424242;
    background-color: #4b4b4b;
}
.drop {
    width: 12px;
    height: 13px;
    border: 1px solid #424242;
    background-color: #626262;
}
.locks {
    display: flex;
    gap: 5px;
    margin-left: 5px;
}
.layer-footer {
    gap: 8px;
}
.fx {
    font-family: "Liberation Serif", serif;
    font-style: italic;
    font-size: 10px;
}

/* Watermark over the bottom right corner */
.watermark {
    position: absolute;
    right: -1px;
    bottom: 36px;
    display: flex;
    align-items: center;
    gap: 4px;
    width: 186px;
    height: 70px;
    padding-left: 8px;
    background-color: rgba(255, 255, 255, 0.5);
}
.watermark svg {
    width: 48px;
    height: 46px;
}
.watermark-text {
    display: flex;
    flex-direction: column;
    padding-top: 4px;
    color: #268050;
    font-family: "DejaVu Sans", sans-serif;
    font-size: 20px;
    line-height: 22px;
}
.watermark-text strong {
    color: #3b73a8;
    font-family: "Noto Sans CJK SC", sans-serif;
    font-size: 22px;
    line-height: 26px;
}
```
